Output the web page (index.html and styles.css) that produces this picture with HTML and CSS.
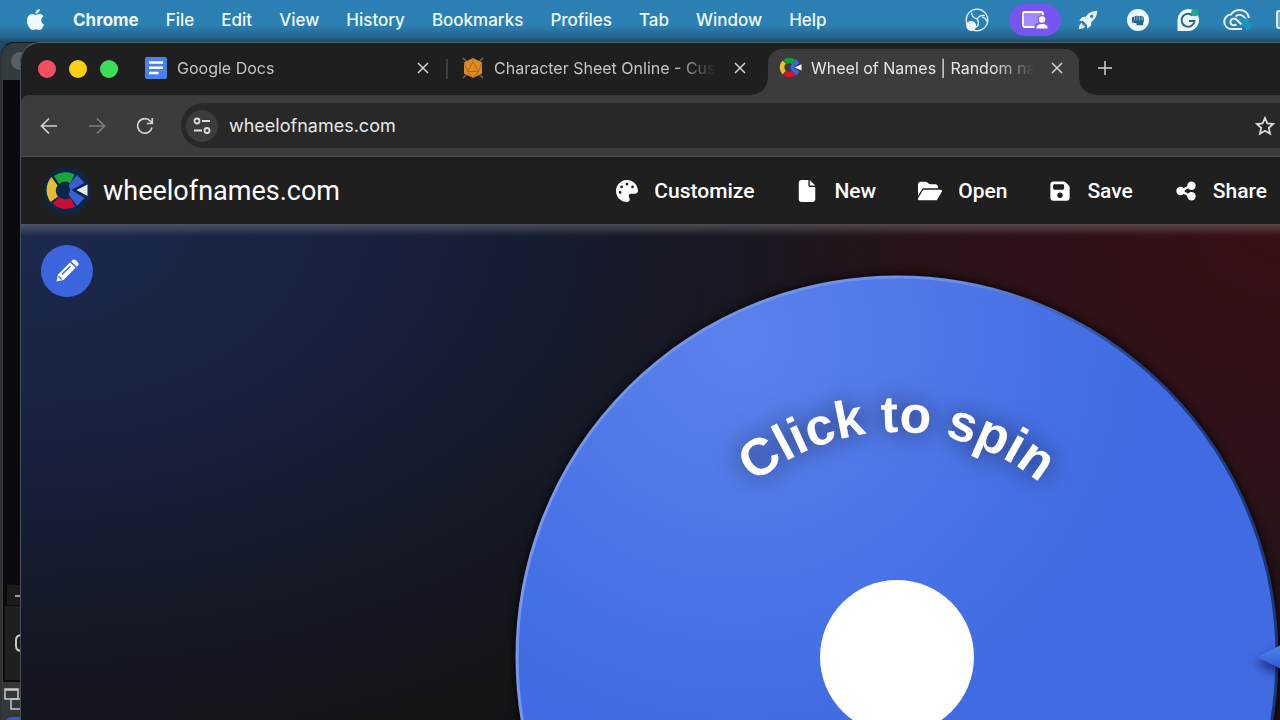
FILE: index.html
```html
<!DOCTYPE html>
<html lang="en">
<head>
    <meta charset="UTF-8">
    <title>Wheel of Names | Random name picker</title>
    <link rel="stylesheet" href="styles.css">
</head>
<body>
<header class="menubar">
    <nav class="menus">
        <a class="apple" href="#" aria-label="Apple">
            <svg width="21" height="21" viewBox="0 0 24 24" fill="currentColor"><path d="M12.152 6.896c-.948 0-2.415-1.078-3.96-1.040-2.040.027-3.910 1.183-4.961 3.014-2.117 3.675-.546 9.103 1.519 12.090 1.013 1.454 2.208 3.090 3.792 3.039 1.520-.065 2.090-.987 3.935-.987 1.831 0 2.350.987 3.960.948 1.637-.026 2.676-1.480 3.676-2.948 1.156-1.688 1.636-3.325 1.662-3.415-.039-.013-3.182-1.221-3.220-4.857-.026-3.040 2.480-4.494 2.597-4.559-1.429-2.090-3.623-2.324-4.390-2.376-2-.156-3.675 1.090-4.610 1.090zM15.530 3.830c.843-1.012 1.400-2.427 1.245-3.830-1.207.052-2.662.805-3.532 1.818-.780.896-1.454 2.338-1.273 3.714 1.338.104 2.715-.688 3.559-1.701"/></svg>
        </a>
        <a class="app-name" href="#">Chrome</a>
        <a href="#">File</a>
        <a href="#">Edit</a>
        <a href="#">View</a>
        <a href="#">History</a>
        <a href="#">Bookmarks</a>
        <a href="#">Profiles</a>
        <a href="#">Tab</a>
        <a href="#">Window</a>
        <a href="#">Help</a>
    </nav>
    <div class="tray">
        <button class="tray-item recorder" aria-label="Recorder">
            <svg width="24" height="24" viewBox="0 0 24 24" fill="none" stroke="#dff4fb" stroke-width="1.3">
                <circle cx="12" cy="12" r="10.8"/>
                <path d="M6.500 4.500c.3 3.500 2.300 6 5.800 6.500M12.300 11c1.500-3 4-4.200 7.500-3.500M12.300 11c1.800 3 1.500 6-1 8.500M17 8.800c2.500.8 4.300 2.500 5 4.500"/>
                <circle cx="6.200" cy="18" r="5" fill="#f0f4ff" stroke="none"/>
            </svg>
        </button>
        <button class="tray-item sharing" aria-label="Screen sharing">
            <svg width="28" height="20" viewBox="0 0 28 20" fill="#fff">
                <rect x="2" y="2" width="20" height="15" rx="1.500" fill="#a08cfb" stroke="#fff" stroke-width="1.800"/>
                <circle cx="21" cy="9.500" r="4.500" fill="#7a5cf2"/>
                <path d="M13.500 20v-3.500q0-4 7.500-4t7 4V20z" fill="#7a5cf2"/>
                <circle cx="21" cy="9.500" r="3.200"/>
                <path d="M15.500 18.500v-1q0-3.500 5.500-3.500t5.500 3.500v1z"/>
            </svg>
        </button>
        <button class="tray-item" aria-label="Rocket">
            <svg width="20" height="20" viewBox="0 0 24 24" fill="#e9f8fd">
                <path fill-rule="evenodd" d="M23 1c-6 0-10.500 2.500-13.500 7L5 8.500 1.500 13l4.500.2 4.800 4.800.2 4.500 4.500-3.500.5-4.500c4.500-3 7-7.500 7-13.500zM16.500 5.500a2 2 0 1 1 0 4 2 2 0 0 1 0-4z"/>
                <path d="M5 15.500c-2.500.3-3.800 3-4 7.500 4.500-.2 7.200-1.500 7.500-4l-2 .8.500-2.300-2.600.6z"/>
            </svg>
        </button>
        <button class="tray-item" aria-label="Fist">
            <svg width="22" height="22" viewBox="0 0 22 22">
                <circle cx="11" cy="11" r="11" fill="#eefaff"/>
                <path d="M5 8.500l2.500-1 2-.8 2 .3 2-.2 3 1 .5 4-.8 2.500v2H9.500v-2L5 13.500z" fill="#25638c"/>
                <path d="M7.500 7.500v4M10 7v4.500M12.600 7v4.500M15 7.500v4" stroke="#cfeaf5" stroke-width=".6"/>
            </svg>
        </button>
        <button class="tray-item" aria-label="Writing assistant">
            <svg width="24" height="24" viewBox="0 0 24 24">
                <path d="M12 1a11 11 0 1 1 0 22H1.500V12A11 11 0 0 1 12 1z" fill="#eefaff"/>
                <path d="M16.500 7.500a6.500 6.500 0 1 0 2 5.500H13" fill="none" stroke="#28658c" stroke-width="2"/>
                <circle cx="19" cy="4.500" r="3.800" fill="#23a68b"/>
            </svg>
        </button>
        <button class="tray-item" aria-label="Creative Cloud">
            <svg width="30" height="24" viewBox="0 0 30 24" fill="none" stroke="#e3f6fc" stroke-width="2">
                <path d="M19 21H9a7 7 0 0 1-1-14.500q3-4.500 8.500-4.500 8 0 9.500 8"/>
                <path d="M13.500 16.500q-4.500 2-6-1.500-.5-4 3.500-4.500 2 .3 3.500 2l4.500 4.500M12.500 8.500q4-3.500 8 0l2.500 3"/>
                <path d="M17 11l4 4-2 2 4 1.500 1 3 5-4-4-2-1-3-4-2z" fill="#1996ba" stroke="#1996ba"/>
            </svg>
        </button>
        <button class="tray-item cut" aria-label="Display">
            <svg width="20" height="20" viewBox="0 0 20 20"><rect x="1" y="1" width="18" height="17" rx="2" fill="#6fa9c9" stroke="#d8eef7" stroke-width="2"/></svg>
        </button>
    </div>
</header>

<main class="desktop">
    <div class="back-window">
        <div class="back-title"><span class="back-light"></span></div>
        <div class="back-body">
            <svg width="20" height="140" viewBox="0 0 20 140" fill="none" stroke="#c9c9c9">
                <rect x="4" y="5" width="16" height="20" fill="#1b1b1d" stroke="none"/>
                <rect x="2" y="26" width="18" height="74" fill="#1e1f21" stroke="none"/>
                <rect x="0" y="102" width="20" height="38" fill="#343539" stroke="none"/>
                <path d="M12 16h7" stroke-width="1.500"/>
                <path d="M19 55q-6 0-6 5v6q0 5 6 5" stroke-width="2"/>
                <path d="M2 109h13v10H2zM2 110h13" stroke-width="1.500"/>
                <path d="M8 119v10h11M8 119h11" stroke-width="1.500"/>
                <path d="M3 140q1-3 6-3h11v3z" fill="#3555c8" stroke="none"/>
            </svg>
        </div>
    </div>

    <section class="window">
        <div class="tabstrip">
            <div class="lights">
                <button class="light red" aria-label="Close window"></button>
                <button class="light yellow" aria-label="Minimize"></button>
                <button class="light green" aria-label="Zoom"></button>
            </div>
            <div class="tabs">
                <div class="tab">
                    <svg width="22" height="22" viewBox="0 0 22 22"><rect width="22" height="22" rx="2" fill="#4a80ec"/><path d="M4 5.500h14M4 10.800h14M4 16h9.500" stroke="#fff" stroke-width="2.500"/></svg>
                    <a class="tab-title" href="#">Google Docs</a>
                    <button class="close" aria-label="Close tab"><svg width="12" height="12" viewBox="0 0 12 12"><path d="M1 1l10 10M11 1L1 11"/></svg></button>
                </div>
                <div class="tab divided">
                    <svg width="22" height="22" viewBox="0 0 22 22">
                        <path d="M1 1l20 20M21 1L1 21" stroke="#6a6a6c" stroke-width="1.500"/>
                        <path d="M11 1l9 4.500v11L11 21l-9-4.500v-11z" fill="#e08a22"/>
                        <path d="M11 5l5.500 9.500h-11zM11 1v4M2 5.500l3.500 9M20 5.500l-3.500 9M5.500 14.500L11 21l5.500-6.500" fill="none" stroke="#b0661a" stroke-width="1"/>
                    </svg>
                    <a class="tab-title" href="#">Character Sheet Online - Cus</a>
                    <button class="close" aria-label="Close tab"><svg width="12" height="12" viewBox="0 0 12 12"><path d="M1 1l10 10M11 1L1 11"/></svg></button>
                </div>
                <div class="tab active">
                    <svg width="24" height="24" viewBox="2 2 46 46">
                        <path d="M10.700 10.700A19 19 0 0 0 10.700 37.300L17 30.500a9.500 9.500 0 0 1 0-13.500z" fill="#ecc12f"/>
                        <path d="M12 9a19 19 0 0 1 23 0l-5.500 9a9.500 9.500 0 0 0-11 0z" fill="#12a038"/>
                        <path d="M12 39a19 19 0 0 0 23 0l-5.500-9a9.500 9.500 0 0 1-11 0z" fill="#d5132c"/>
                        <path d="M37 8l6 8-11 8 11 8-6 8-11-13v-6z" fill="#3c66df"/>
                        <path d="M34 24l13-6v12z" fill="#f2f4fa"/>
                    </svg>
                    <a class="tab-title" href="#">Wheel of Names | Random na</a>
                    <button class="close" aria-label="Close tab"><svg width="12" height="12" viewBox="0 0 12 12"><path d="M1 1l10 10M11 1L1 11"/></svg></button>
                </div>
            </div>
            <button class="new-tab" aria-label="New tab"><svg width="14" height="14" viewBox="0 0 14 14"><path d="M7 0v14M0 7h14"/></svg></button>
        </div>

        <div class="toolbar">
            <button class="tool" aria-label="Back"><svg width="18" height="18" viewBox="0 0 18 18"><path d="M17 9H2M9 1.500L1.500 9 9 16.500"/></svg></button>
            <button class="tool" aria-label="Forward" disabled><svg width="18" height="18" viewBox="0 0 18 18"><path d="M1 9h15M9 1.500L16.500 9 9 16.500"/></svg></button>
            <button class="tool" aria-label="Reload"><svg width="18" height="18" viewBox="0 0 18 18"><path d="M16 10.500A7.300 7.300 0 1 1 14.500 4.200L16 6M16.300 1v5.500h-5.500"/></svg></button>
            <div class="address">
                <button class="site-info" aria-label="Site information">
                    <svg width="18" height="18" viewBox="0 0 18 18"><circle cx="4" cy="4" r="2.500"/><path d="M9 4h8M1 13.500h8"/><circle cx="14" cy="13.500" r="2.500"/></svg>
                </button>
                <input class="url" type="text" aria-label="Address" value="wheelofnames.com">
                <button class="star" aria-label="Bookmark this tab">
                    <svg width="20" height="20" viewBox="0 0 20 20"><path d="M10 2l2.400 5.400 5.800.6-4.400 3.900 1.300 5.800L10 14.700l-5.100 3 1.300-5.800L1.800 8l5.800-.6z"/></svg>
                </button>
            </div>
        </div>

        <div class="site-header">
            <a class="brand" href="#">
                <svg width="48" height="48" viewBox="0 0 48 48">
                    <circle cx="24" cy="24" r="23.500" fill="#0a2748"/>
                    <path d="M8.500 10A20 20 0 0 0 7.500 35L15 29.500a9.500 9.500 0 0 1-.5-11z" fill="#e5bd35"/>
                    <path d="M11 9a19 19 0 0 1 20.500-1.500l-4 9a9.500 9.500 0 0 0-11.500.5z" fill="#1ba63a"/>
                    <path d="M9.500 36.500a19 19 0 0 0 22.500 3l-4.500-9a9.500 9.500 0 0 1-11.500-.5z" fill="#c90e34"/>
                    <path d="M34 8l7.500 8-13 7 13 8-7.500 8-8.500-11.500a8 8 0 0 0 0-9z" fill="#3b5fd0"/>
                    <path d="M33.500 23l11-5.500v11.500z" fill="#e9edf2"/>
                </svg>
                <span>wheelofnames.com</span>
            </a>
            <nav class="actions">
                <button class="action">
                    <svg width="22" height="22" viewBox="0 0 512 512"><path d="M512 256c0 .9 0 1.800 0 2.700c-.4 36.500-33.600 61.300-70.100 61.300H344c-26.500 0-48 21.500-48 48c0 3.400 .4 6.700 1 9.900c2.100 10.200 6.500 20 10.800 29.900c6.100 13.800 12.100 27.500 12.100 42c0 31.800-21.600 60.700-53.400 62c-3.500 .1-7 .2-10.600 .2C114.600 512 0 397.400 0 256S114.600 0 256 0S512 114.600 512 256zM128 288a32 32 0 1 0 -64 0 32 32 0 1 0 64 0zm0-96a32 32 0 1 0 0-64 32 32 0 1 0 0 64zM288 96a32 32 0 1 0 -64 0 32 32 0 1 0 64 0zm96 96a32 32 0 1 0 0-64 32 32 0 1 0 0 64z"/></svg>
                    Customize
                </button>
                <button class="action">
                    <svg width="22" height="22" viewBox="-64 0 512 512"><path d="M0 64C0 28.700 28.700 0 64 0H224V128c0 17.700 14.300 32 32 32H384V448c0 35.300-28.700 64-64 64H64c-35.300 0-64-28.700-64-64V64zm384 64H256V0L384 128z"/></svg>
                    New
                </button>
                <button class="action">
                    <svg width="24" height="22" viewBox="0 0 576 512"><path d="M88.700 223.800L0 375.800V96C0 60.700 28.700 32 64 32H181.500c17 0 33.300 6.700 45.300 18.700l26.500 26.500c12 12 28.300 18.700 45.300 18.700H416c35.300 0 64 28.700 64 64v32H144c-22.800 0-43.800 12.100-55.300 31.800zm27.600 16.100C122.100 230 132.600 224 144 224H544c11.500 0 22 6.100 27.700 16.100s5.700 22.200-.1 32.100l-112 192C453.900 474 443.400 480 432 480H32c-11.500 0-22-6.100-27.700-16.100s-5.700-22.200 .1-32.100l112-192z"/></svg>
                    Open
                </button>
                <button class="action">
                    <svg width="22" height="22" viewBox="-32 0 512 512"><path d="M64 32C28.700 32 0 60.700 0 96V416c0 35.300 28.700 64 64 64H384c35.300 0 64-28.700 64-64V173.300c0-17-6.700-33.300-18.700-45.300L352 50.700C340 38.700 323.700 32 306.700 32H64zm0 96c0-17.700 14.300-32 32-32H288c17.700 0 32 14.300 32 32v64c0 17.700-14.300 32-32 32H96c-17.700 0-32-14.300-32-32V128zM224 288a64 64 0 1 1 0 128 64 64 0 1 1 0-128z"/></svg>
                    Save
                </button>
                <button class="action">
                    <svg width="22" height="22" viewBox="0 0 22 22"><path d="M16 5.500L6 11l10 5.500" fill="none" stroke="#fff" stroke-width="2.500"/><circle cx="5.500" cy="11" r="4.200"/><circle cx="16.500" cy="5.800" r="4.200"/><circle cx="16.500" cy="16.200" r="4.200"/></svg>
                    Share
                </button>
            </nav>
        </div>

        <div class="stage">
            <button class="edit" aria-label="Edit wheel">
                <svg width="24" height="24" viewBox="0 0 24 24"><path d="M15.200 3.300l5.500 5.500L8.500 21 1.500 22.500 3 15.500z" fill="#fff"/><path d="M16.200 2.300l1.200-1.200q1.800-1.400 3.600.2l1.700 1.700q1.600 1.800.2 3.600l-1.200 1.200z" fill="#fff"/><path d="M7 15.500l8.500-8.500" stroke="#3b64dd" stroke-width="1.300"/><path d="M3.500 17.500l3 3" stroke="#3b64dd" stroke-width="1.300"/><path d="M15.200 2.500l6.300 6.300" stroke="#3b64dd" stroke-width="1"/></svg>
            </button>
            <svg class="wheel" width="766" height="766" viewBox="0 0 766 766" role="img" aria-label="Wheel">
                <defs>
                    <radialGradient id="shine" gradientUnits="userSpaceOnUse" cx="225" cy="65" r="420">
                        <stop offset="0" stop-color="#5b81ec"/>
                        <stop offset=".4" stop-color="#5179e8"/>
                        <stop offset=".75" stop-color="#4670e5"/>
                        <stop offset="1" stop-color="#416be2"/>
                    </radialGradient>
                    <linearGradient id="rim" x1="0" y1="0.300" x2="1" y2="0.500">
                        <stop offset="0" stop-color="#7b97e6"/>
                        <stop offset=".5" stop-color="#6c8fe8"/>
                        <stop offset=".75" stop-color="#223f8c"/>
                        <stop offset="1" stop-color="#1c3576"/>
                    </linearGradient>
                    <linearGradient id="arrow" x1="0" y1="0" x2="0" y2="1">
                        <stop offset="0" stop-color="#7097f2"/>
                        <stop offset=".5" stop-color="#3f70e0"/>
                        <stop offset="1" stop-color="#1d3fa6"/>
                    </linearGradient>
                    <path id="arc" d="M158 385a225 225 0 0 1 450 0"/>
                </defs>
                <circle cx="383" cy="385" r="380" fill="url(#shine)" stroke="url(#rim)" stroke-width="3"/>
                <circle cx="383" cy="385" r="77" fill="#fff"/>
                <text class="spin-text" text-anchor="middle"><textPath href="#arc" startOffset="50%">Click to spin</textPath></text>
                <path class="pointer" d="M743 385l50-25v50z" fill="url(#arrow)"/>
            </svg>
        </div>
    </section>
</main>
</body>
</html>
```
FILE: styles.css
```css
* {
    box-sizing: border-box;
}
body {
    margin: 0;
    height: 100vh;
    display: flex;
    flex-direction: column;
    overflow: hidden;
    background-color: #1d4b6b;
    font-family: Inter, "Liberation Sans", sans-serif;
}
button {
    padding: 0;
    border: 0;
    background: none;
    color: inherit;
    font: inherit;
    cursor: pointer;
}
a {
    color: inherit;
    text-decoration: none;
}
svg {
    display: block;
    flex: none;
}

/* menu bar */
.menubar {
    flex: none;
    height: 42px;
    display: flex;
    justify-content: space-between;
    background: linear-gradient(#2c80b4 0%, #2c7fb2 60%, #24638b 90%, #1c4a69 100%);
    color: #effaff;
    font-size: 17px;
    font-weight: 500;
}
.menus {
    display: flex;
    align-items: center;
    gap: 27px;
    padding: 0 0 3px 25px;
}
.app-name {
    font-weight: 700;
}
.tray {
    display: flex;
    align-items: center;
    padding-bottom: 2px;
}
.tray-item {
    width: 50px;
    display: flex;
    justify-content: center;
}
.sharing {
    width: 52px;
    height: 32px;
    margin: 0 2px 0 7px;
    align-items: center;
    border-radius: 16px;
    background-color: #7557f0;
}
.cut {
    width: 17px;
    padding-left: 13px;
    justify-content: flex-start;
    overflow: hidden;
}

/* windows */
.desktop {
    position: relative;
    flex: 1;
    min-height: 0;
    display: flex;
    padding-left: 20px;
}
.back-window {
    position: absolute;
    top: 0;
    bottom: 0;
    left: 0;
    width: 60px;
    display: flex;
    flex-direction: column;
    border-left: 2px solid #2e3135;
    border-top: 1px solid #15181a;
    border-radius: 14px 0 0 0;
    background-color: #0b0b0f;
    overflow: hidden;
}
.back-title {
    height: 37px;
    padding: 9px;
    background-color: #343b3f;
}
.back-light {
    display: block;
    width: 18px;
    height: 18px;
    border-radius: 50%;
    background-color: #596064;
}
.back-body {
    flex: 1;
    display: flex;
    align-items: flex-end;
    border-left: 1px solid #3a3c40;
}
.window {
    position: relative;
    flex: 1;
    min-width: 0;
    display: flex;
    flex-direction: column;
    border-top: 1px solid #55636b;
    border-left: 1px solid #4a4e55;
    border-radius: 20px 0 0 0;
    background-color: #1f1f1f;
    overflow: hidden;
}

/* tab strip */
.tabstrip {
    height: 52px;
    display: flex;
    padding: 6px 0 0 17px;
    color: #c4c4c4;
}
.lights {
    display: flex;
    gap: 13px;
    padding-top: 11px;
}
.light {
    width: 18px;
    height: 18px;
    border-radius: 50%;
}
.red {
    background-color: #f54e62;
}
.yellow {
    background-color: #f8d111;
}
.green {
    background-color: #3ddd5b;
}
.tabs {
    display: flex;
    gap: 6px;
    margin-left: 16px;
}
.tab {
    position: relative;
    width: 311px;
    display: flex;
    align-items: center;
    gap: 10px;
    padding: 0 13px 8px 11px;
    font-size: 16px;
}
.tab-title {
    flex: 1;
    overflow: hidden;
    white-space: nowrap;
    mask-image: linear-gradient(to right, #000 80%, transparent 98%);
}
.divided::before {
    content: "";
    position: absolute;
    left: -5px;
    top: 10px;
    width: 2px;
    height: 20px;
    background-color: #3e3e3e;
}
.active {
    padding-left: 10px;
    gap: 9px;
    border-radius: 14px 14px 0 0;
    background-color: #3c3c3c;
    color: #e6e6e6;
}
.active::before,
.active::after {
    content: "";
    position: absolute;
    bottom: 0;
    width: 16px;
    height: 16px;
}
.active::before {
    right: 100%;
    background: radial-gradient(circle at 0 0, transparent 15px, #3c3c3c 16px);
}
.active::after {
    left: 100%;
    background: radial-gradient(circle at 100% 0, transparent 15px, #3c3c3c 16px);
}
.close {
    width: 18px;
    display: flex;
    justify-content: center;
}
.close path,
.new-tab path {
    fill: none;
    stroke: #d4d4d4;
    stroke-width: 1.5;
}
.new-tab {
    margin-left: 19px;
    padding-bottom: 8px;
}

/* toolbar */
.toolbar {
    height: 62px;
    display: flex;
    align-items: center;
    border-bottom: 1px solid #4c4c4c;
    border-radius: 8px 0 0 0;
    padding-left: 4px;
    background-color: #3c3c3c;
}
.tool {
    width: 48px;
    height: 40px;
    display: flex;
    align-items: center;
    justify-content: center;
}
.tool path {
    fill: none;
    stroke: #d0d0d0;
    stroke-width: 1.7;
}
.tool:disabled path {
    stroke: #7d7d7d;
}
.address {
    flex: 1;
    height: 45px;
    display: flex;
    align-items: center;
    gap: 11px;
    margin-left: 12px;
    padding: 0 5px;
    border-radius: 23px 0 0 23px;
    background-color: #282828;
}
.site-info {
    width: 32px;
    height: 32px;
    display: flex;
    align-items: center;
    justify-content: center;
    border-radius: 50%;
    background-color: #3c3c3c;
}
.site-info circle,
.site-info path,
.star path {
    fill: none;
    stroke: #dcdcdc;
    stroke-width: 1.8;
}
.url {
    flex: 1;
    min-width: 0;
    padding: 0;
    border: 0;
    outline: 0;
    background: none;
    color: #e8e8e8;
    font: 18px Inter, "Liberation Sans", sans-serif;
}

/* site */
.site-header {
    height: 67px;
    display: flex;
    align-items: center;
    justify-content: space-between;
    padding: 0 13px 0 22px;
    background-color: #1f1f1f;
    color: #fff;
    font-family: Roboto, "Liberation Sans", sans-serif;
}
.brand {
    display: flex;
    align-items: center;
    gap: 12px;
    font-size: 27px;
}
.actions {
    display: flex;
    gap: 42px;
}
.action {
    display: flex;
    align-items: center;
    gap: 16px;
    font-size: 21px;
    font-weight: 500;
}
.action svg {
    fill: #fff;
}
.stage {
    flex: 1;
    min-height: 0;
    display: flex;
    align-items: flex-start;
    justify-content: space-between;
    padding-top: 21px;
    padding-left: 20px;
    overflow: hidden;
    background:
        linear-gradient(rgba(150, 150, 150, 0.4), transparent 12px),
        radial-gradient(ellipse 900px 560px at 0 0, #1c2a4e 0%, rgba(24, 33, 64, 0.95) 40%, rgba(22, 27, 44, 0.75) 70%, transparent 100%),
        radial-gradient(ellipse 720px 640px at 100% 0, #380f14 0%, #2c1218 40%, transparent 100%),
        #131416;
}
.edit {
    width: 52px;
    height: 52px;
    display: flex;
    align-items: center;
    justify-content: center;
    border-radius: 50%;
    background-color: #3b64dd;
}
.wheel {
    margin-top: 27px;
    overflow: visible;
    filter: drop-shadow(0 0 5px #000);
}
.spin-text {
    fill: #fff;
    font: bold 52px "Liberation Sans", sans-serif;
    filter: drop-shadow(0 0 12px rgba(0, 0, 0, 0.6));
}
.pointer {
    filter: drop-shadow(-2px 6px 5px rgba(0, 0, 60, 0.5));
}
```
